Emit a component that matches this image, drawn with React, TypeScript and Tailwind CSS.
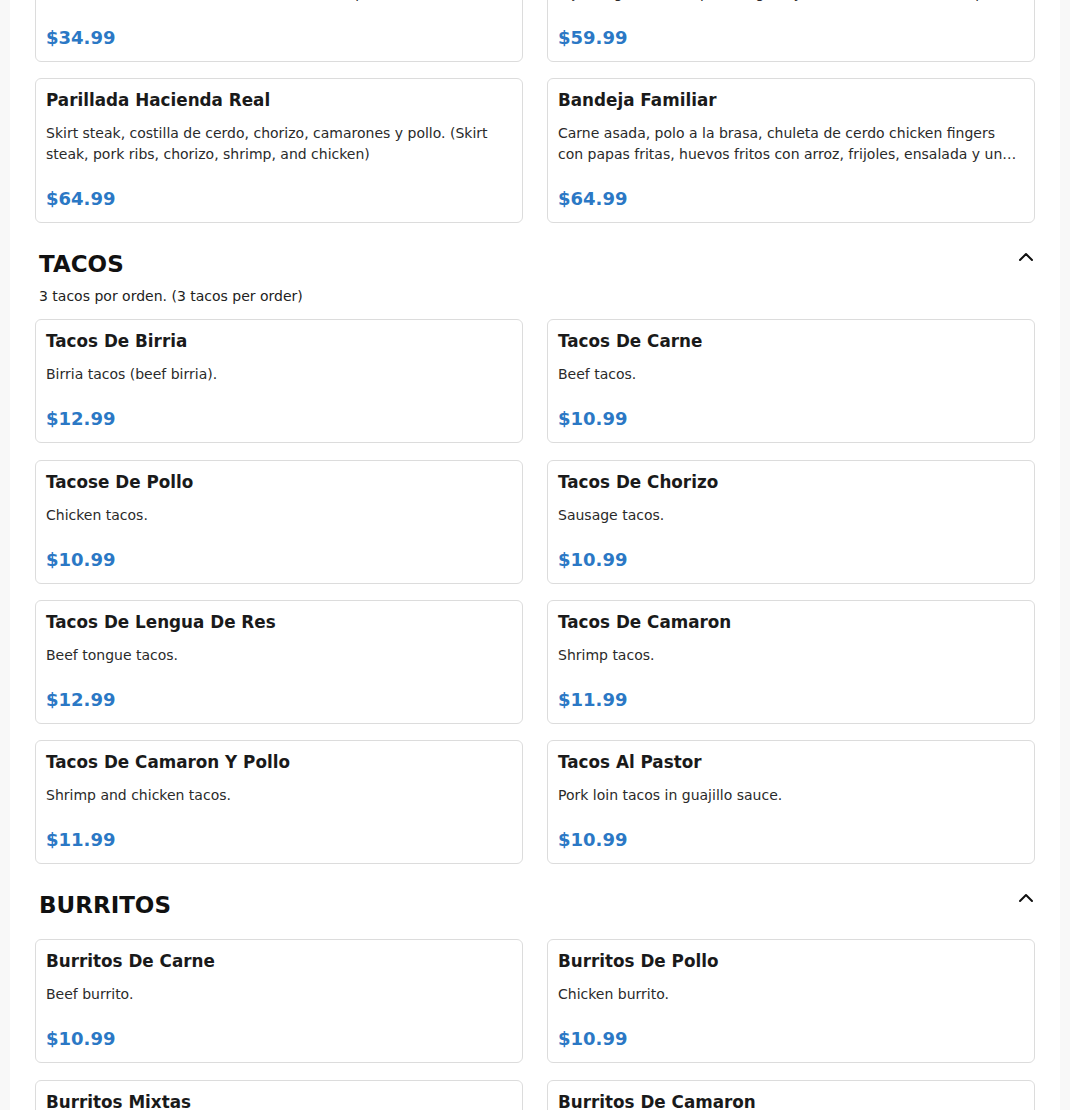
import { ChevronUp } from 'lucide-react';

type Item = { name: string; desc: string; price: string };

type Section = { title?: string; note?: string; items: Item[] };

const sections: Section[] = [
  {
    items: [
      {
        name: 'Parillada Para Dos',
        desc: 'Carne asada, pollo, chorizo y costilla de cerdo con arroz, frijoles y ensalada. (Skirt steak, chicken, chorizo and pork ribs with rice, beans, and salad)',
        price: '$34.99',
      },
      {
        name: 'Parillada Mixta',
        desc: 'Carne asada, pollo, camarones, chorizo y costilla con arroz, frijoles, guacamole, pico de gallo y tortillas hechas a mano para compartir.',
        price: '$59.99',
      },
      {
        name: 'Parillada Hacienda Real',
        desc: 'Skirt steak, costilla de cerdo, chorizo, camarones y pollo. (Skirt steak, pork ribs, chorizo, shrimp, and chicken)',
        price: '$64.99',
      },
      {
        name: 'Bandeja Familiar',
        desc: 'Carne asada, polo a la brasa, chuleta de cerdo chicken fingers con papas fritas, huevos fritos con arroz, frijoles, ensalada y una jarra de limonada.',
        price: '$64.99',
      },
    ],
  },
  {
    title: 'TACOS',
    note: '3 tacos por orden. (3 tacos per order)',
    items: [
      { name: 'Tacos De Birria', desc: 'Birria tacos (beef birria).', price: '$12.99' },
      { name: 'Tacos De Carne', desc: 'Beef tacos.', price: '$10.99' },
      { name: 'Tacose De Pollo', desc: 'Chicken tacos.', price: '$10.99' },
      { name: 'Tacos De Chorizo', desc: 'Sausage tacos.', price: '$10.99' },
      { name: 'Tacos De Lengua De Res', desc: 'Beef tongue tacos.', price: '$12.99' },
      { name: 'Tacos De Camaron', desc: 'Shrimp tacos.', price: '$11.99' },
      { name: 'Tacos De Camaron Y Pollo', desc: 'Shrimp and chicken tacos.', price: '$11.99' },
      { name: 'Tacos Al Pastor', desc: 'Pork loin tacos in guajillo sauce.', price: '$10.99' },
    ],
  },
  {
    title: 'BURRITOS',
    items: [
      { name: 'Burritos De Carne', desc: 'Beef burrito.', price: '$10.99' },
      { name: 'Burritos De Pollo', desc: 'Chicken burrito.', price: '$10.99' },
      { name: 'Burritos Mixtas', desc: 'Beef and chicken burrito.', price: '$11.99' },
      { name: 'Burritos De Camaron', desc: 'Shrimp burrito.', price: '$12.99' },
    ],
  },
];

const MenuCard = ({ item }: { item: Item }) => (
  <div className="bg-white border border-[#dcdcdc] rounded-md px-[10px] pt-[9px] pb-[9px] flex flex-col">
    <h3 className="text-[16.8px] leading-6 font-bold text-[#1a1a1a]">{item.name}</h3>
    <p className="mt-[11px] text-sm leading-[21px] text-[#2a2a2a] line-clamp-2">{item.desc}</p>
    <div className="mt-5 text-lg leading-7 font-bold text-[#2b78c5]">{item.price}</div>
  </div>
);

const App = () => {
  return (
    <div className="min-h-screen bg-[#f8f8f8] font-['DejaVu_Sans',sans-serif]">
      <div className="max-w-[1050px] mx-auto bg-white px-[25px] pb-10 min-h-screen overflow-hidden">
        <div className="-mt-[83px]">
          {sections.map((section, i) => (
            <section key={i} className={section.title ? 'pt-[25px]' : ''}>
              {section.title && (
                <div className={section.note ? 'mb-3' : 'mb-[17px]'}>
                  <div className="flex items-start justify-between px-1">
                    <h2 className="text-[23px] leading-[33px] font-bold text-[#111]">{section.title}</h2>
                    <ChevronUp className="mt-[-3px] -mr-[7px] text-[#111]" size={24} strokeWidth={2} />
                  </div>
                  {section.note && (
                    <p className="mt-[5px] px-1 text-sm leading-[21px] text-[#222]">{section.note}</p>
                  )}
                </div>
              )}
              <div className="grid grid-cols-2 gap-x-6 gap-y-[16.33px]">
                {section.items.map((item) => (
                  <MenuCard key={item.name} item={item} />
                ))}
              </div>
            </section>
          ))}
        </div>
      </div>
    </div>
  );
};

export default App;
